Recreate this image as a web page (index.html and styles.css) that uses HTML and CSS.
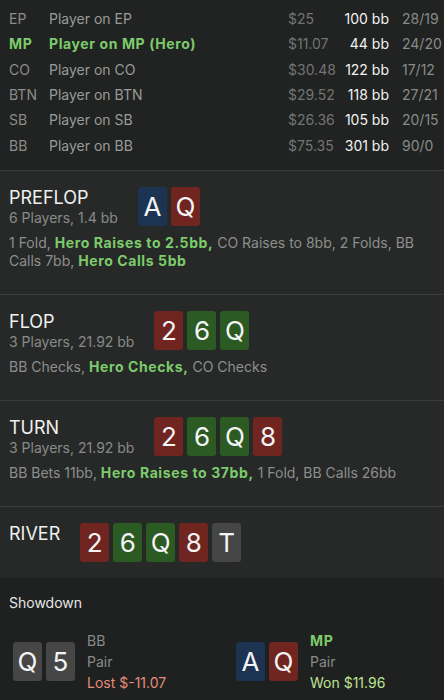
FILE: index.html
```html
<!DOCTYPE html>
<html lang="en">
<head>
    <meta charset="UTF-8">
    <meta name="viewport" content="width=device-width, initial-scale=1.0">
    <title>Hand Replay</title>
    <link rel="stylesheet" href="styles.css">
</head>
<body>

    <div class="players">
        <div class="pos">EP</div><div class="name">Player on EP</div><div class="money">$25</div><div class="bb">100 bb</div><div class="stat">28/19</div>
        <div class="pos hero">MP</div><div class="name hero">Player on MP (Hero)</div><div class="money">$11.07</div><div class="bb">44 bb</div><div class="stat">24/20</div>
        <div class="pos">CO</div><div class="name">Player on CO</div><div class="money">$30.48</div><div class="bb">122 bb</div><div class="stat">17/12</div>
        <div class="pos">BTN</div><div class="name">Player on BTN</div><div class="money">$29.52</div><div class="bb">118 bb</div><div class="stat">27/21</div>
        <div class="pos">SB</div><div class="name">Player on SB</div><div class="money">$26.36</div><div class="bb">105 bb</div><div class="stat">20/15</div>
        <div class="pos">BB</div><div class="name">Player on BB</div><div class="money">$75.35</div><div class="bb">301 bb</div><div class="stat">90/0</div>
    </div>

    <section class="street">
        <div class="street-head">
            <div class="street-info">
                <div class="street-name">PREFLOP</div>
                <div class="street-sub">6 Players, 1.4 bb</div>
            </div>
            <div class="cards">
                <div class="card blue">A</div>
                <div class="card red">Q</div>
            </div>
        </div>
        <p class="actions">1 Fold, <b>Hero Raises to 2.5bb,</b> CO Raises to 8bb, 2 Folds, BB Calls 7bb, <b>Hero Calls 5bb</b></p>
    </section>

    <section class="street">
        <div class="street-head">
            <div class="street-info">
                <div class="street-name">FLOP</div>
                <div class="street-sub">3 Players, 21.92 bb</div>
            </div>
            <div class="cards">
                <div class="card red">2</div>
                <div class="card green">6</div>
                <div class="card green">Q</div>
            </div>
        </div>
        <p class="actions">BB Checks, <b>Hero Checks,</b> CO Checks</p>
    </section>

    <section class="street">
        <div class="street-head">
            <div class="street-info">
                <div class="street-name">TURN</div>
                <div class="street-sub">3 Players, 21.92 bb</div>
            </div>
            <div class="cards">
                <div class="card red">2</div>
                <div class="card green">6</div>
                <div class="card green">Q</div>
                <div class="card red">8</div>
            </div>
        </div>
        <p class="actions">BB Bets 11bb, <b>Hero Raises to 37bb,</b> 1 Fold, BB Calls 26bb</p>
    </section>

    <section class="street">
        <div class="street-head">
            <div class="street-info">
                <div class="street-name">RIVER</div>
            </div>
            <div class="cards">
                <div class="card red">2</div>
                <div class="card green">6</div>
                <div class="card green">Q</div>
                <div class="card red">8</div>
                <div class="card gray">T</div>
            </div>
        </div>
    </section>

    <section class="showdown">
        <div class="showdown-title">Showdown</div>
        <div class="showdown-hands">
            <div class="hand">
                <div class="cards">
                    <div class="card gray">Q</div>
                    <div class="card gray">5</div>
                </div>
                <div class="hand-info">
                    <div>BB</div>
                    <div>Pair</div>
                    <div class="lost">Lost $-11.07</div>
                </div>
            </div>
            <div class="hand">
                <div class="cards">
                    <div class="card blue">A</div>
                    <div class="card red">Q</div>
                </div>
                <div class="hand-info">
                    <div class="hero">MP</div>
                    <div>Pair</div>
                    <div class="won">Won $11.96</div>
                </div>
            </div>
        </div>
    </section>

</body>
</html>
```

FILE: styles.css
```css
body {
    margin: 0;
    font-family: Inter, "Liberation Sans", sans-serif;
    font-size: 14px;
    background-color: #1e211f;
    color: #e8e8e8;
}

/* player list */
.players {
    display: grid;
    grid-template-columns: 40px 239px 45px 56px 1fr;
    padding: 6px 0 12px 9px;
    background-color: #202321;
    line-height: 25.33px;
}

.pos {
    color: #8c8c8c;
}

.name {
    color: #9a9a9a;
}

.money {
    color: #747474;
    white-space: nowrap;
}

.bb {
    color: #f2f2f2;
    text-align: right;
    white-space: nowrap;
}

.stat {
    color: #8a8a8a;
    padding-left: 13px;
}

.hero {
    color: #7dcb6c;
    font-weight: 700;
    letter-spacing: 0.6px;
}

/* streets */
.street {
    background-color: #262927;
    border-top: 1px solid #3a3d3b;
    padding: 16px 10px 16px 9px;
}

.street-head {
    display: flex;
    align-items: flex-start;
    gap: 20px;
}

.street-name {
    font-size: 18px;
    line-height: 22px;
    color: #f0f0f0;
}

.street-sub {
    color: #8a8a8a;
    line-height: 18px;
}

.actions {
    margin: 7px 0 8px;
    color: #8e8e8e;
    line-height: 18px;
}

.actions b {
    color: #7dcb6c;
    letter-spacing: 0.6px;
}

/* cards */
.cards {
    display: flex;
    gap: 4px;
}

.card {
    width: 29px;
    height: 39px;
    border-radius: 3px;
    color: #f4f4f4;
    font-size: 26px;
    line-height: 39px;
    text-align: center;
}

.blue {
    background-color: #1c3351;
}

.red {
    background-color: #702521;
}

.green {
    background-color: #2b5a23;
}

.gray {
    background-color: #464646;
}

/* showdown */
.showdown {
    padding: 16px 0 7px 9px;
}

.showdown-title {
    line-height: 18px;
    color: #e6e6e6;
}

.showdown-hands {
    display: grid;
    grid-template-columns: 223px 1fr;
    margin-top: 18px;
    padding-left: 4px;
}

.hand {
    display: flex;
    align-items: center;
    gap: 12px;
}

.hand-info {
    line-height: 21px;
    color: #8a8a8a;
}

.lost {
    color: #e58b79;
}

.won {
    color: #bfe390;
}
```
